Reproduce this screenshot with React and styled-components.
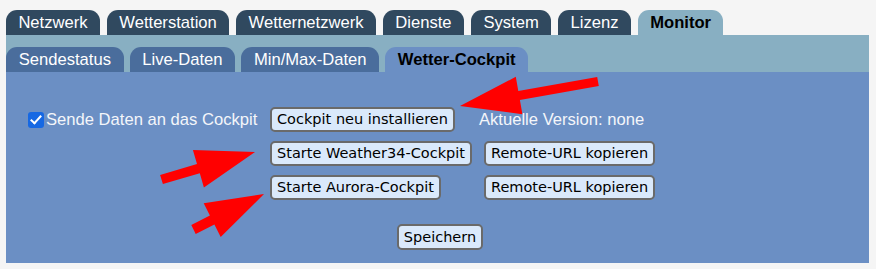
import React from "react";
import styled, { createGlobalStyle } from "styled-components";

const Global = createGlobalStyle`
  html, body { margin: 0; padding: 0; background: #f5f5f5; }
  body { font-family: "Liberation Sans", Arial, sans-serif; font-size: 16.6px; }
`;

const Page = styled.div`
  position: relative;
  width: 876px;
  height: 269px;
  padding: 10px 7px 0 6px;
  box-sizing: border-box;
`;

const TabRow = styled.div`
  display: flex;
  gap: 7px;
  align-items: flex-end;
`;

const Tab = styled.div`
  height: 25px;
  line-height: 26px;
  padding: 0 12.4px;
  border-radius: 11px 11px 0 0;
  font-size: 16.6px;
  white-space: nowrap;
  background: ${(p) => (p.$active ? "#88afc2" : "#30495f")};
  color: ${(p) => (p.$active ? "#000" : "#fff")};
  font-weight: ${(p) => (p.$active ? "bold" : "normal")};
`;

const SubTab = styled(Tab)`
  padding: 0 12.7px;
  background: ${(p) => (p.$active ? "#6b8fc4" : "#4a6d9c")};
`;

const Band = styled.div`
  background: #88afc2;
  padding-top: 12px;
`;

const SubTabRow = styled(TabRow)`
  gap: 6px;
`;

const Content = styled.div`
  background: #6b8fc4;
  height: 191px;
  box-sizing: border-box;
  padding-top: 35px;
`;

const Form = styled.div`
  display: grid;
  grid-template-columns: 242px 209px auto;
  row-gap: 9px;
  align-items: center;
  padding-left: 22px;
`;

const CheckLabel = styled.label`
  display: flex;
  align-items: center;
  gap: 2px;
  color: #f4f6fa;
  font-size: 16.6px;
  white-space: nowrap;
`;

const Check = styled.input.attrs({ type: "checkbox" })`
  appearance: none;
  -webkit-appearance: none;
  margin: 0;
  flex: none;
  width: 16px;
  height: 16px;
  border-radius: 3px;
  background: #1668e3;
  position: relative;
  &::after {
    content: "";
    position: absolute;
    left: 5px;
    top: 1px;
    width: 4px;
    height: 9px;
    border: solid #fff;
    border-width: 0 2.5px 2.5px 0;
    transform: rotate(42deg);
  }
`;

const Info = styled.span`
  color: #f4f6fa;
  font-size: 16.6px;
  white-space: nowrap;
`;

const Button = styled.button`
  justify-self: start;
  height: ${(p) => (p.$tall ? "26px" : "25px")};
  margin-left: ${(p) => (p.$offset ? "5px" : "0")};
  padding: 0 5px;
  border: 2px solid #6a6a6a;
  border-radius: 5px;
  background: #dae9fb;
  color: #000;
  font-family: "DejaVu Sans", Verdana, sans-serif;
  font-size: 14.5px;
  line-height: 19px;
  white-space: nowrap;
  cursor: pointer;
`;

const Footer = styled.div`
  display: flex;
  justify-content: center;
  padding-left: 5px;
  margin-top: 24px;
`;

const Overlay = styled.svg`
  position: absolute;
  left: 0;
  top: 0;
  pointer-events: none;
`;

function arrowPoints(T, P, w, L, H) {
  const dx = P[0] - T[0];
  const dy = P[1] - T[1];
  const len = Math.hypot(dx, dy);
  const ux = dx / len, uy = dy / len;
  const nx = -uy, ny = ux;
  const B = [P[0] - ux * L, P[1] - uy * L];
  const pts = [
    [T[0] + nx * w, T[1] + ny * w],
    [B[0] + nx * w, B[1] + ny * w],
    [B[0] + nx * H, B[1] + ny * H],
    P,
    [B[0] - nx * H, B[1] - ny * H],
    [B[0] - nx * w, B[1] - ny * w],
    [T[0] - nx * w, T[1] - ny * w],
  ];
  return pts.map((p) => p.map((v) => v.toFixed(1)).join(",")).join(" ");
}

const arrows = [
  { T: [598, 81.5], P: [460, 106], w: 4.6, L: 60, H: 19 },
  { T: [161.5, 179.5], P: [255, 152], w: 4.8, L: 59, H: 19.5 },
  { T: [193.5, 229.5], P: [264, 194], w: 5, L: 58, H: 18.8 },
];

const mainTabs = ["Netzwerk", "Wetterstation", "Wetternetzwerk", "Dienste", "System", "Lizenz", "Monitor"];
const subTabs = ["Sendestatus", "Live-Daten", "Min/Max-Daten", "Wetter-Cockpit"];

export default function App() {
  return (
    <Page>
      <Global />
      <TabRow>
        {mainTabs.map((t) => (
          <Tab key={t} $active={t === "Monitor"}>{t}</Tab>
        ))}
      </TabRow>
      <Band>
        <SubTabRow>
          {subTabs.map((t) => (
            <SubTab key={t} $active={t === "Wetter-Cockpit"}>{t}</SubTab>
          ))}
        </SubTabRow>
      </Band>
      <Content>
        <Form>
          <CheckLabel>
            <Check defaultChecked />
            Sende Daten an das Cockpit
          </CheckLabel>
          <Button>Cockpit neu installieren</Button>
          <Info>Aktuelle Version: none</Info>

          <span />
          <Button>Starte Weather34-Cockpit</Button>
          <Button $offset>Remote-URL kopieren</Button>

          <span />
          <Button>Starte Aurora-Cockpit</Button>
          <Button $offset>Remote-URL kopieren</Button>
        </Form>
        <Footer>
          <Button $tall>Speichern</Button>
        </Footer>
      </Content>
      <Overlay width="876" height="269" viewBox="0 0 876 269">
        {arrows.map((a, i) => (
          <polygon key={i} points={arrowPoints(a.T, a.P, a.w, a.L, a.H)} fill="#ff0000" />
        ))}
      </Overlay>
    </Page>
  );
}
